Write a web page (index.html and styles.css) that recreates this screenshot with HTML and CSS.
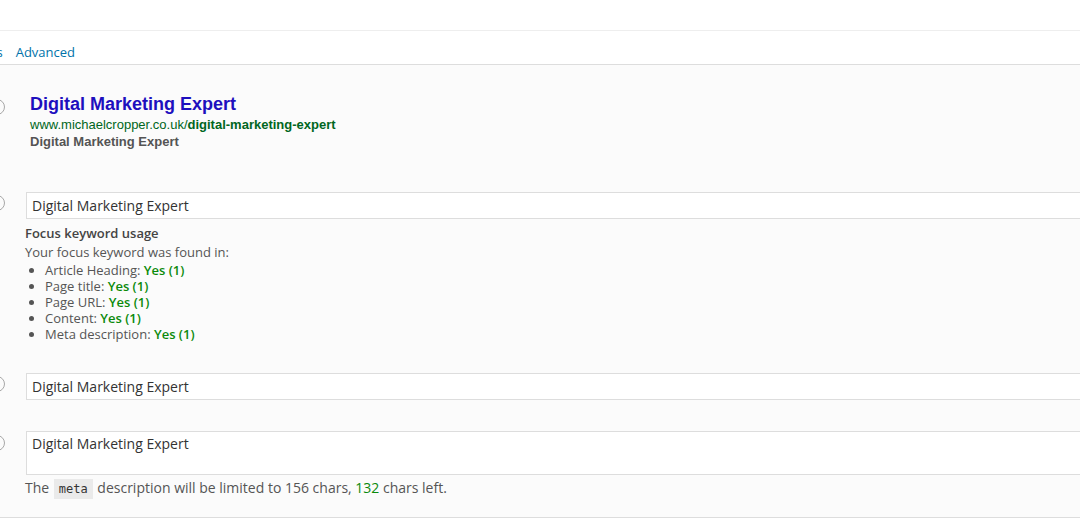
FILE: index.html
```html
<!DOCTYPE html>
<html lang="en">
<head>
<meta charset="utf-8">
<title>Yoast SEO</title>
<link rel="stylesheet" href="styles.css">
</head>
<body>
<div class="topbar"></div>
<nav class="tabs">
  <a class="tab tab-cut">Page Analysis</a>
  <a class="tab">Advanced</a>
</nav>
<div class="main">
  <div class="row row-snippet">
    <span class="help help-snippet"></span>
    <div class="snippet">
      <div class="snip-title">Digital Marketing Expert</div>
      <div class="snip-url">www.michaelcropper.co.uk/<b>digital-marketing-expert</b></div>
      <div class="snip-desc">Digital Marketing Expert</div>
    </div>
  </div>

  <div class="row row-focus">
    <span class="help"></span>
    <div class="field">
      <input class="text-input" type="text" value="Digital Marketing Expert">
      <div class="usage">
        <div class="usage-head">Focus keyword usage</div>
        <div class="usage-sub">Your focus keyword was found in:</div>
        <ul class="usage-list">
          <li>Article Heading: <b class="good">Yes (1)</b></li>
          <li>Page title: <b class="good">Yes (1)</b></li>
          <li>Page URL: <b class="good">Yes (1)</b></li>
          <li>Content: <b class="good">Yes (1)</b></li>
          <li>Meta description: <b class="good">Yes (1)</b></li>
        </ul>
      </div>
    </div>
  </div>

  <div class="row row-title">
    <span class="help"></span>
    <div class="field">
      <input class="text-input" type="text" value="Digital Marketing Expert">
    </div>
  </div>

  <div class="row row-desc">
    <span class="help help-area"></span>
    <div class="field">
      <textarea class="text-area">Digital Marketing Expert</textarea>
      <div class="desc-note">The <code>meta</code> description will be limited to 156 chars, <span class="count">132</span> chars left.</div>
    </div>
  </div>
</div>
</body>
</html>
```

FILE: styles.css
```css
html, body {
  margin: 0;
  padding: 0;
}
body {
  background: #fff;
  font-family: "Open Sans", "Noto Sans", sans-serif;
  color: #444;
  overflow: hidden;
  width: 1080px;
  height: 523px;
}
.topbar {
  height: 30px;
  border-bottom: 1px solid #eeeeee;
}
.tabs {
  display: flex;
  height: 33px;
  border-bottom: 1px solid #dddddd;
  align-items: flex-start;
  margin-left: -79px;
  white-space: nowrap;
}
.tab {
  font-size: 13px;
  line-height: 18px;
  color: #0073aa;
  margin-top: 12px;
  margin-right: 13px;
}
.main {
  background: #fbfbfb;
  padding-bottom: 19px;
  border-bottom: 1px solid #dddddd;
}
.row {
  display: flex;
  align-items: flex-start;
}
.help {
  flex: none;
  width: 14px;
  height: 14px;
  border: 1px solid #a8a8a8;
  border-radius: 50%;
  margin-left: -11px;
  margin-right: 20px;
  margin-top: 3px;
  box-sizing: content-box;
}
.help-snippet { margin-top: 6px; }
.help-area { margin-top: 4px; }

.row-snippet { padding-top: 28px; }
.snippet {
  padding-left: 5px;
  font-family: "Liberation Sans", Arial, sans-serif;
}
.snip-title {
  font-size: 18px;
  line-height: 22px;
  font-weight: bold;
  color: #1e0fbe;
}
.snip-url {
  margin-top: 2px;
  font-size: 13px;
  line-height: 16px;
  color: #006621;
}
.snip-url b { font-weight: bold; }
.snip-desc {
  margin-top: 1px;
  font-size: 13px;
  line-height: 16px;
  font-weight: bold;
  color: #545454;
}

.field {
  flex: 1;
}
.text-input, .text-area {
  display: block;
  box-sizing: border-box;
  width: 1120px;
  margin: 0 0 0 1px;
  border: 1px solid #dddddd;
  background: #fff;
  font-family: "Open Sans", "Noto Sans", sans-serif;
  font-size: 14px;
  color: #333;
  padding: 0 5px;
  outline: none;
}
.text-input {
  height: 27px;
  line-height: 25px;
}
.text-area {
  height: 44px;
  line-height: 20px;
  padding-top: 2px;
  resize: none;
  overflow: hidden;
}

.row-focus { margin-top: 42px; }
.usage {
  margin-top: 5px;
  font-size: 13px;
  color: #555;
}
.usage-head {
  font-weight: 600;
  line-height: 19px;
  color: #444;
}
.usage-sub {
  line-height: 19px;
}
.usage-list {
  margin: 0;
  padding-left: 20px;
  font-size: 13px;
  line-height: 16px;
  list-style: disc;
}
.good {
  color: #0b8a0b;
  font-weight: 600;
}

.row-title { margin-top: 31px; }
.row-desc { margin-top: 31px; }
.desc-note {
  margin-top: 3px;
  font-size: 14px;
  line-height: 20px;
  color: #555;
}
.desc-note code {
  font-family: "DejaVu Sans Mono", "Liberation Mono", monospace;
  font-size: 12px;
  line-height: 14px;
  background: #eaeaea;
  padding: 3px 5px;
  margin: 0 1px;
  color: #333;
}
.count {
  color: #0b8a0b;
}
```
